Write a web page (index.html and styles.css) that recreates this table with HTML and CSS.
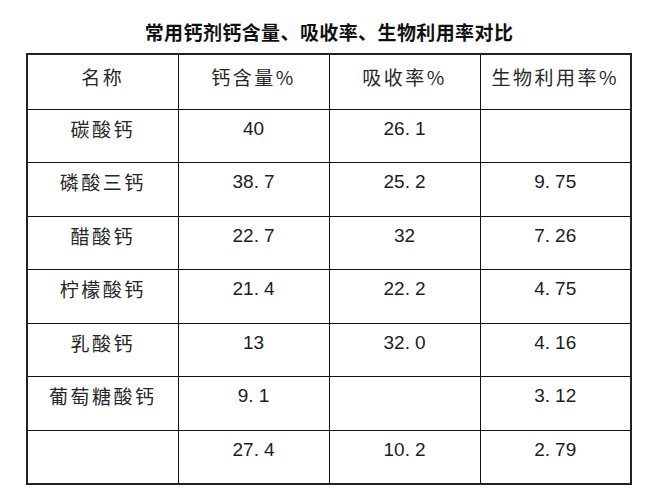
FILE: index.html
```html
<!DOCTYPE html>
<html lang="zh-CN">
<head>
<meta charset="utf-8">
<title>常用钙剂钙含量、吸收率、生物利用率对比</title>
<link rel="stylesheet" href="styles.css">
</head>
<body>
<div class="page">
  <h1 class="title">常用钙剂钙含量、吸收率、生物利用率对比</h1>
  <table class="grid">
    <tr class="head">
      <td class="cjk">名称</td>
      <td class="cjk">钙含量%</td>
      <td class="cjk">吸收率%</td>
      <td class="cjk">生物利用率%</td>
    </tr>
    <tr>
      <td class="cjk">碳酸钙</td>
      <td class="num">40</td>
      <td class="num">26<span class="pt">.</span>1</td>
      <td class="num"></td>
    </tr>
    <tr>
      <td class="cjk">磷酸三钙</td>
      <td class="num">38<span class="pt">.</span>7</td>
      <td class="num">25<span class="pt">.</span>2</td>
      <td class="num">9<span class="pt">.</span>75</td>
    </tr>
    <tr>
      <td class="cjk">醋酸钙</td>
      <td class="num">22<span class="pt">.</span>7</td>
      <td class="num">32</td>
      <td class="num">7<span class="pt">.</span>26</td>
    </tr>
    <tr>
      <td class="cjk">柠檬酸钙</td>
      <td class="num">21<span class="pt">.</span>4</td>
      <td class="num">22<span class="pt">.</span>2</td>
      <td class="num">4<span class="pt">.</span>75</td>
    </tr>
    <tr>
      <td class="cjk">乳酸钙</td>
      <td class="num">13</td>
      <td class="num">32<span class="pt">.</span>0</td>
      <td class="num">4<span class="pt">.</span>16</td>
    </tr>
    <tr>
      <td class="cjk">葡萄糖酸钙</td>
      <td class="num">9<span class="pt">.</span>1</td>
      <td class="num"></td>
      <td class="num">3<span class="pt">.</span>12</td>
    </tr>
    <tr>
      <td class="cjk"></td>
      <td class="num">27<span class="pt">.</span>4</td>
      <td class="num">10<span class="pt">.</span>2</td>
      <td class="num">2<span class="pt">.</span>79</td>
    </tr>
  </table>
</div>
</body>
</html>
```

FILE: styles.css
```css
html, body {
  margin: 0;
  padding: 0;
  background: #ffffff;
}

.page {
  width: 664px;
  height: 499px;
  padding: 0 0 0 26px;
  box-sizing: border-box;
  color: #1c1c1c;
  font-family: "Liberation Sans", "Noto Sans CJK SC", sans-serif;
}

.title {
  margin: 0;
  width: 606px;
  height: 53px;
  padding-top: 19px;
  box-sizing: border-box;
  text-align: center;
  font-family: "Noto Sans CJK SC", sans-serif;
  font-size: 19px;
  font-weight: 700;
  line-height: 25px;
  letter-spacing: 0.4px;
  color: #111;
}

.grid {
  border-collapse: collapse;
  table-layout: fixed;
  width: 606px;
  border: 2px solid #222;
}

.grid td {
  width: 25%;
  height: 53.6px;
  border: 1px solid #111;
  padding: 6px 0 0 0;
  box-sizing: border-box;
  vertical-align: top;
  text-align: center;
  font-size: 19px;
  line-height: 25px;
}

.grid .head td {
  height: 55px;
  padding-top: 9px;
}

.cjk {
  font-family: "Noto Sans CJK SC", sans-serif;
  font-weight: 400;
  letter-spacing: 2.5px;
  padding-left: 3px;
  color: #262626;
}

.num {
  font-family: "Liberation Sans", sans-serif;
}

.pt {
  margin-right: 5px;
}
```
